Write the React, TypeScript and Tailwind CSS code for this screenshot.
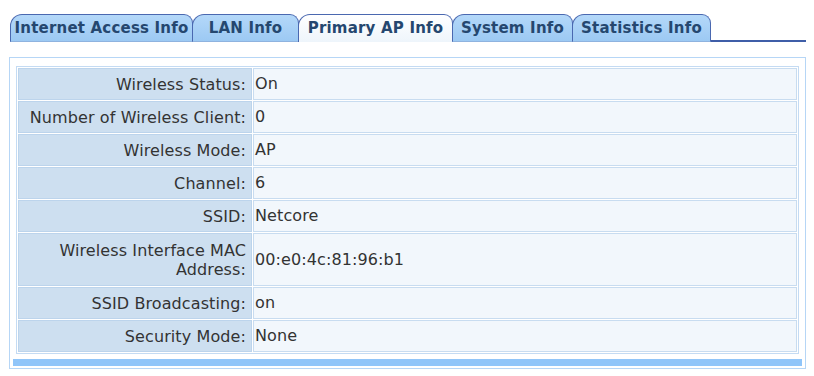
const tabs = [
  { label: "Internet Access Info", w: "w-[183px]" },
  { label: "LAN Info", w: "w-[107px]" },
  { label: "Primary AP Info", w: "w-[155px]", active: true },
  { label: "System Info", w: "w-[121px]" },
  { label: "Statistics Info", w: "w-[139px]" },
];

const rows: { label: string[]; value: string; tall?: boolean }[] = [
  { label: ["Wireless Status:"], value: "On" },
  { label: ["Number of Wireless Client:"], value: "0" },
  { label: ["Wireless Mode:"], value: "AP" },
  { label: ["Channel:"], value: "6" },
  { label: ["SSID:"], value: "Netcore" },
  { label: ["Wireless Interface MAC", "Address:"], value: "00:e0:4c:81:96:b1", tall: true },
  { label: ["SSID Broadcasting:"], value: "on" },
  { label: ["Security Mode:"], value: "None" },
];

function Tabs() {
  return (
    <div className="flex items-end h-[28px] pl-[10px] pr-[8px]">
      {tabs.map(({ label, w, active }, i) => (
        <div
          key={label}
          className={`${w} ${i > 0 ? "-ml-px" : ""} h-[28px] flex items-center justify-center rounded-tl-[12px] rounded-tr-[9px] border border-[#4a68b0] font-bold text-[15px] tracking-[0.2px] text-[#25476f] ${
            active
              ? "border-b-0 bg-gradient-to-b from-[#ffffff] to-[#eef5fb]"
              : "border-b-[#8fb3df] bg-gradient-to-b from-[#b4d8f9] to-[#9cc9f3]"
          }`}
          style={{ fontFamily: '"DejaVu Sans", Verdana, sans-serif' }}
        >
          {label}
        </div>
      ))}
      <div className="flex-1 border-b-2 border-[#3f5ea8] h-[28px]" />
    </div>
  );
}

function InfoTable() {
  return (
    <div className="border border-[#c4dbf3] p-px bg-white flex flex-col gap-px">
      {rows.map(({ label, value, tall }) => (
        <div key={value + label[0]} className={`flex gap-px ${tall ? "h-[53px]" : "h-[32px]"}`}>
          <div className="w-[234px] shrink-0 bg-[#cddff0] border border-[#bcd4ec] flex flex-col justify-center items-end pr-[5px] leading-[19px]">
            {label.map((l) => (
              <span key={l}>{l}</span>
            ))}
          </div>
          <div className="flex-1 bg-[#f2f7fc] border border-[#c8dcf0] flex items-center pl-[1px]">
            {value}
          </div>
        </div>
      ))}
    </div>
  );
}

export default function App() {
  return (
    <div
      className="w-[814px] h-[376px] bg-white pt-[14px] text-[16px] text-[#333333] tracking-[0.1px]"
      style={{ fontFamily: '"DejaVu Sans", Tahoma, sans-serif' }}
    >
      <Tabs />
      <div className="mt-[15px] ml-[9px] w-[797px] border border-[#b6d6f6] pt-[8px] px-[6px] pb-[2px]">
        <InfoTable />
        <div className="mt-[5px] -mx-[3px] h-[7px] bg-[#90c5f9]" />
      </div>
    </div>
  );
}
